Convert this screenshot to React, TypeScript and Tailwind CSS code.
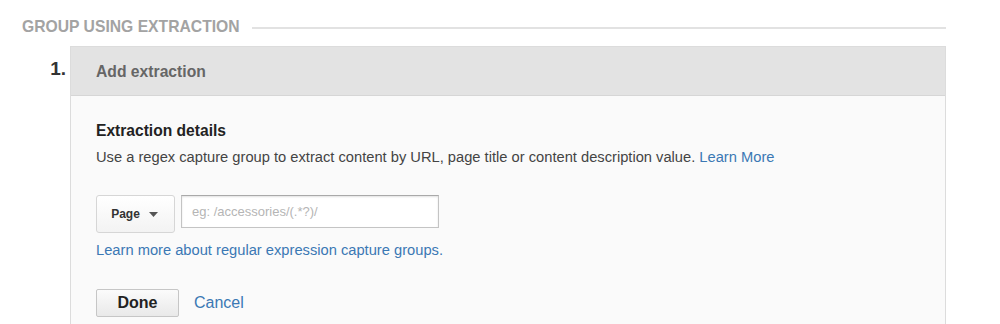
import React from 'react';

export default function App() {
  return (
    <div className="w-[1000px] h-[324px] bg-white overflow-hidden pl-[22px] pr-[54px] pt-[16px] font-['Liberation_Sans',Arial,sans-serif]">
      {/* Section title */}
      <div className="flex items-center h-[22px]">
        <span className="text-[15.7px] font-bold text-[#a3a3a3] uppercase leading-none whitespace-nowrap">
          Group using extraction
        </span>
        <div className="flex-1 h-[2px] bg-[#e2e2e2] ml-[12px] mt-[1px]" />
      </div>

      {/* Step row */}
      <div className="flex mt-[8px]">
        <div className="w-[48px] shrink-0 text-right pr-[4px] pt-[13px] text-[19px] font-bold text-[#333] leading-none">
          1.
        </div>
        <div className="flex-1 border-l border-r border-t border-[#dcdcdc] bg-[#fafafa] h-[290px]">
          <div className="h-[49px] bg-[#e3e3e3] border-b border-[#d6d6d6] flex items-center pl-[25px]">
            <span className="text-[15.7px] font-bold text-[#666] pt-[1px]">Add extraction</span>
          </div>

          <div className="pl-[25px] pt-[27px]">
            <div className="text-[15.6px] font-bold text-[#222] leading-none">Extraction details</div>
            <p className="text-[14.7px] text-[#444] mt-[11px] leading-none">
              Use a regex capture group to extract content by URL, page title or content description value.{' '}
              <a className="text-[#3b78b4]">Learn More</a>
            </p>

            <div className="flex items-start mt-[31px] gap-[6px]">
              <button className="w-[79px] h-[38px] rounded-[3px] border border-[#d6d6d6] bg-gradient-to-b from-white to-[#f3f3f3] flex items-center justify-center gap-[9px] text-[12px] font-bold text-[#333] pr-[2px]">
                <span>Page</span>
                <svg width="9" height="5" viewBox="0 0 9 5" className="mt-[1px]">
                  <path d="M0 0 L9 0 L4.5 5 Z" fill="#555" />
                </svg>
              </button>
              <div className="w-[258px] h-[33px] border border-[#c4c4c4] border-t-[#a9a9a9] bg-white shadow-[inset_0_1px_2px_rgba(0,0,0,0.12)] flex items-center pl-[10px]">
                <span className="text-[13px] text-[#b5b5b5]">eg: /accessories/(.*?)/</span>
              </div>
            </div>

            <a className="block text-[14.7px] text-[#3b78b4] mt-[10px] leading-none">
              Learn more about regular expression capture groups.
            </a>

            <div className="flex items-center mt-[31px]">
              <button className="w-[83px] h-[28px] rounded-[2px] border border-[#c6c6c6] bg-gradient-to-b from-[#fbfbfb] to-[#e9e9e9] text-[16px] font-bold text-[#222] leading-none">
                Done
              </button>
              <a className="ml-[15px] text-[16px] text-[#3b78b4]">Cancel</a>
            </div>
          </div>
        </div>
      </div>
    </div>
  );
}
